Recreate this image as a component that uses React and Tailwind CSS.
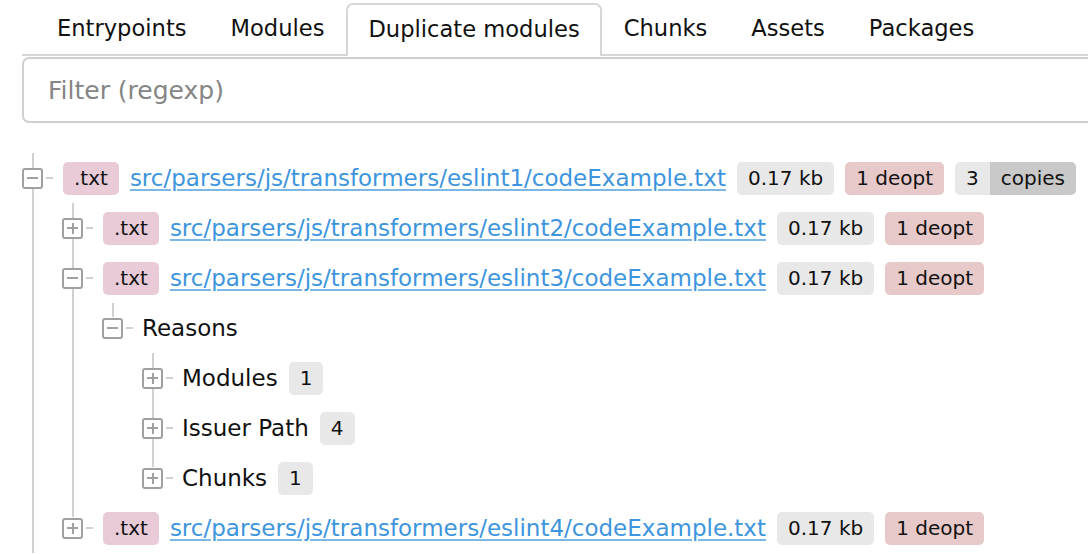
import { useState } from 'react';

const TABS = ['Entrypoints', 'Modules', 'Duplicate modules', 'Chunks', 'Assets', 'Packages'];

const path = (n) => `src/parsers/js/transformers/eslint${n}/codeExample.txt`;

const TREE = [
  {
    id: 'm1',
    kind: 'module',
    path: path(1),
    copies: 3,
    open: true,
    children: [
      { id: 'm2', kind: 'module', path: path(2), open: false },
      {
        id: 'm3',
        kind: 'module',
        path: path(3),
        open: true,
        children: [
          {
            id: 'reasons',
            kind: 'label',
            label: 'Reasons',
            open: true,
            children: [
              { id: 'r-mod', kind: 'label', label: 'Modules', count: 1, open: false },
              { id: 'r-iss', kind: 'label', label: 'Issuer Path', count: 4, open: false },
              { id: 'r-chk', kind: 'label', label: 'Chunks', count: 1, open: false }
            ]
          }
        ]
      },
      { id: 'm4', kind: 'module', path: path(4), open: false }
    ]
  }
];

function Toggle({ open }) {
  return (
    <span className="relative flex h-[21px] w-[21px] shrink-0 items-center justify-center rounded-[3px] border-2 border-[#a0a0a0] bg-white">
      <span className="absolute h-[2px] w-[11px] bg-[#a0a0a0]" />
      {!open && <span className="absolute h-[11px] w-[2px] bg-[#a0a0a0]" />}
    </span>
  );
}

function Badge({ className = '', children }) {
  return (
    <span className={`flex h-[33px] items-center rounded-[5px] px-[11px] text-[20px] ${className}`}>
      {children}
    </span>
  );
}

function Row({ node }) {
  return (
    <div className="relative flex h-[50px] items-center whitespace-nowrap">
      <Toggle open={node.open} />
      <span className="ml-[3px] h-[2px] w-[7px] bg-[#d0d0d0]" />
      {node.kind === 'module' ? (
        <div className="ml-[10px] flex items-center gap-[11px]">
          <Badge className="bg-[#e8cbd6]">.txt</Badge>
          <a href="#" className="text-[23px] text-[#3d95dd] underline decoration-[#7db7e6] decoration-2 underline-offset-[3px]">
            {node.path}
          </a>
          <Badge className="bg-[#e8e8e8]">0.17 kb</Badge>
          <Badge className="bg-[#e8c9c9]">1 deopt</Badge>
          {node.copies && (
            <span className="flex h-[33px] overflow-hidden rounded-[5px] text-[20px]">
              <span className="flex items-center bg-[#e8e8e8] px-[11px]">{node.copies}</span>
              <span className="flex items-center bg-[#c9c9c9] px-[11px]">copies</span>
            </span>
          )}
        </div>
      ) : (
        <div className="ml-[9px] flex items-center gap-[11px]">
          <span className="text-[23px]">{node.label}</span>
          {node.count != null && <Badge className="bg-[#e8e8e8]">{node.count}</Badge>}
        </div>
      )}
    </div>
  );
}

// vertical connector: runs through siblings, stops at the last sibling's box
function Node({ node, last }) {
  return (
    <div className="relative">
      <span
        className={`absolute left-[10px] top-0 w-[2px] bg-[#d0d0d0] ${last ? 'h-[14px]' : 'bottom-0'}`}
      />
      <Row node={node} />
      {node.open && node.children && (
        <div className="pl-[40px]">
          {node.children.map((child, i) => (
            <Node key={child.id} node={child} last={i === node.children.length - 1} />
          ))}
        </div>
      )}
    </div>
  );
}

export default function App() {
  const [active, setActive] = useState('Duplicate modules');
  const [filter, setFilter] = useState('');

  return (
    <div
      className="h-[554px] w-[1088px] overflow-hidden bg-white text-[#111]"
      style={{ fontFamily: '"DejaVu Sans", Verdana, sans-serif' }}
    >
      <div className="w-[1140px] pl-[22px] pt-[3px]">
        <div className="flex h-[53px] border-b-2 border-[#d6d6d6] pl-[13px]">
          {TABS.map((tab) => (
            <button
              key={tab}
              onClick={() => setActive(tab)}
              className={`-mb-[2px] flex items-center rounded-t-[7px] px-[20px] pb-[1px] text-[22.6px] ${
                active === tab
                  ? 'border-2 border-b-0 border-[#d6d6d6] bg-white'
                  : 'border-2 border-transparent'
              }`}
            >
              {tab}
            </button>
          ))}
        </div>

        <input
          value={filter}
          onChange={(event) => setFilter(event.target.value)}
          placeholder="Filter (regexp)"
          className="mt-[1px] h-[66px] w-full rounded-[7px] border-2 border-[#d0d0d0] px-[24px] text-[25px] outline-none placeholder:text-[#858585]"
        />

        <div className="mt-[30px] h-[500px]">
          {TREE.map((node) => (
            <Node key={node.id} node={node} last={false} />
          ))}
        </div>
      </div>
    </div>
  );
}
